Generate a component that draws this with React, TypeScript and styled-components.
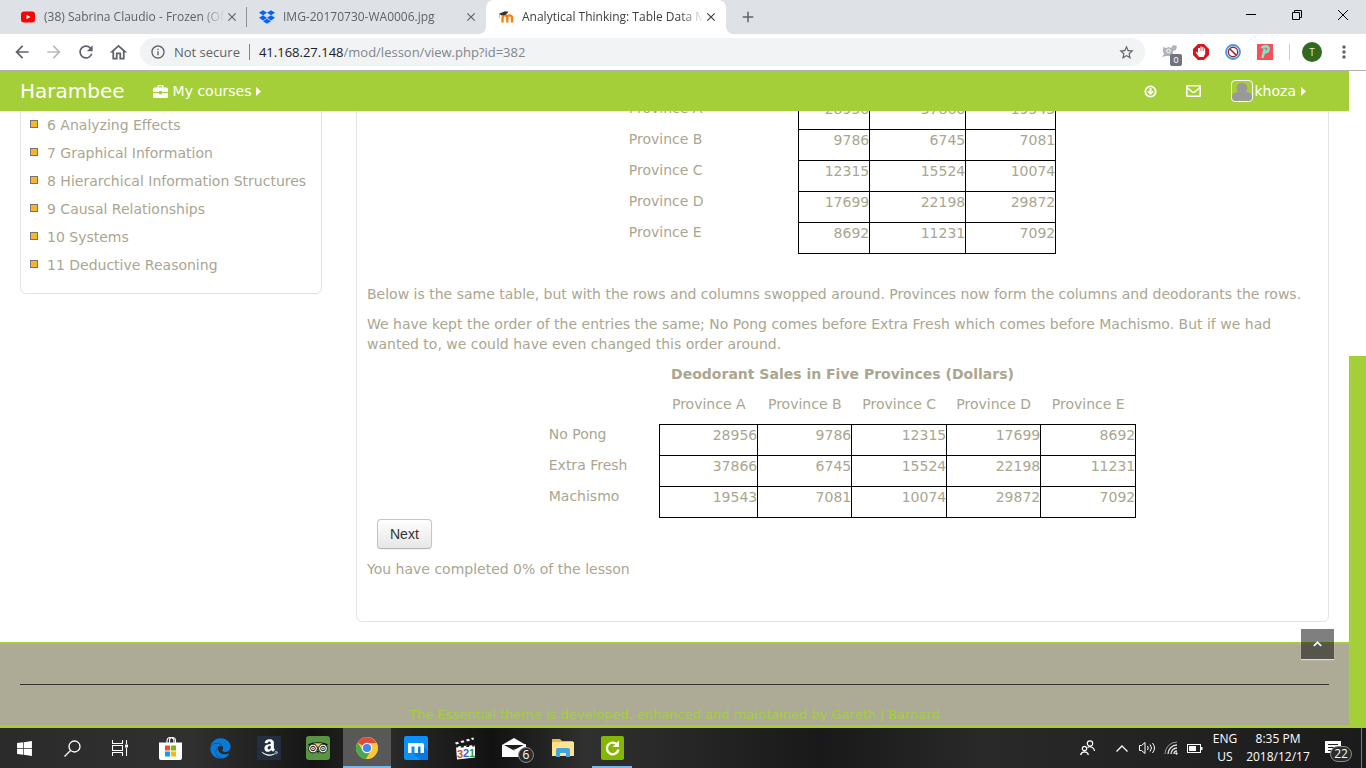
import React from 'react';
import styled, { createGlobalStyle } from 'styled-components';
import {
  MdArrowBack,
  MdArrowForward,
  MdRefresh,
  MdOutlineHome,
  MdInfoOutline,
  MdStarBorder,
  MdMoreVert,
  MdClose,
  MdAdd,
} from 'react-icons/md';
import { FaDropbox, FaWindows, FaAmazon, FaEdge } from 'react-icons/fa';

const green = '#a5cf39';
const stone = '#adaa96';
const uiFont = "'Open Sans', 'Noto Sans', sans-serif";
const pageFont = "Verdana, 'DejaVu Sans', sans-serif";

const GlobalStyle = createGlobalStyle`
  *, *::before, *::after { box-sizing: border-box; }
  body { margin: 0; background: #fff; }
  button { font: inherit; color: inherit; background: none; border: 0; padding: 0; }
  p { margin: 0 0 10px; }
  svg { display: block; flex: none; }
`;

const Screen = styled.div`
  display: flex;
  flex-direction: column;
  height: 100vh;
  overflow: hidden;
`;

/* ---------- browser frame ---------- */

const TitleBar = styled.div`
  display: flex;
  flex: none;
  height: 34px;
  padding-left: 8px;
  background: #dee1e6;
  font: 12px/34px ${uiFont};
  color: #5f6368;
`;

const Tab = styled.div<{ $active?: boolean; $divider?: boolean }>`
  position: relative;
  display: flex;
  align-items: center;
  flex: 0 1 ${p => (p.$active ? 240 : 239)}px;
  min-width: 0;
  padding: 0 8px 0 12px;
  border-radius: 8px 8px 0 0;
  background: ${p => (p.$active ? '#fff' : 'transparent')};
  color: ${p => (p.$active ? '#3c4043' : '#5f6368')};
  ${p =>
    p.$divider &&
    `background: linear-gradient(#8d9196, #8d9196) right 0 top 7px / 1px 20px no-repeat;`}
  ${p =>
    p.$active &&
    `&::before, &::after {
      content: '';
      position: absolute;
      bottom: 0;
      width: 8px;
      height: 8px;
    }
    &::before { left: -8px; background: radial-gradient(circle at 0 0, #dee1e6 8px, #fff 8px); }
    &::after { right: -8px; background: radial-gradient(circle at 100% 0, #dee1e6 8px, #fff 8px); }`}
`;

const TabTitle = styled.span`
  flex: 1;
  min-width: 0;
  margin-left: 8px;
  white-space: nowrap;
  mask-image: linear-gradient(90deg, #000 calc(100% - 24px), transparent);
`;

const IconButton = styled.button<{ $size?: number }>`
  display: flex;
  flex: none;
  align-items: center;
  justify-content: center;
  width: ${p => p.$size ?? 32}px;
  height: ${p => p.$size ?? 32}px;
`;

const NewTab = styled(IconButton)`
  margin-left: 6px;
  height: 34px;
`;

const WindowButtons = styled.div`
  display: flex;
  margin-left: auto;
  color: #000;
  button { width: 46px; height: 29px; }
`;

const Toolbar = styled.div`
  display: flex;
  flex: none;
  align-items: center;
  height: 37px;
  padding: 0 6px;
  background: #fff;
  border-bottom: 1px solid #b0b0b0;
  color: #5f6368;
  font: 13px/28px ${uiFont};
`;

const AddressBar = styled.label`
  display: flex;
  flex: 1;
  align-items: center;
  height: 28px;
  margin: 0 8px 0 6px;
  padding: 0 10px;
  border-radius: 14px;
  background: #f1f3f4;
`;

const Security = styled.span`
  margin-left: 8px;
  padding-right: 9px;
  line-height: 16px;
  border-right: 1px solid #80868b;
`;

const Host = styled.span`
  margin-left: 9px;
  color: #202124;
`;

const PathInput = styled.input`
  flex: 1;
  min-width: 0;
  height: 28px;
  padding: 0;
  border: 0;
  outline: 0;
  background: none;
  font: inherit;
  color: #80868b;
`;

const Badge = styled.span`
  position: absolute;
  right: 3px;
  bottom: 2px;
  width: 12px;
  height: 12px;
  border-radius: 2px;
  background: #6f7480;
  color: #fff;
  font: 9px/12px 'Liberation Sans', sans-serif;
  text-align: center;
`;

const Extension = styled(IconButton)`
  position: relative;
`;

const Divider = styled.span`
  width: 1px;
  height: 16px;
  margin: 0 6px 0 8px;
  background: #c9ccd0;
`;

const Profile = styled.button`
  width: 20px;
  height: 20px;
  margin: 0 6px;
  border-radius: 50%;
  background: #33691e;
  color: #dfe9da;
  font: 10px/20px ${uiFont};
`;

/* ---------- page ---------- */

const Viewport = styled.div`
  display: flex;
  flex: 1;
  min-height: 0;
`;

const ScrollTrack = styled.div`
  display: grid;
  flex: 0 0 17px;
  grid-template-rows: 285fr 372fr;
  background: #fff;
  &::after { content: ''; grid-row: 2; background: ${green}; }
`;

const Page = styled.div`
  position: relative;
  display: flex;
  flex: 1;
  flex-direction: column;
  min-width: 0;
  background: #fff;
  color: #aaa690;
  font: 14px/20px ${pageFont};
`;

const NavBar = styled.header`
  position: relative;
  z-index: 1;
  display: flex;
  flex: none;
  align-items: center;
  height: 40px;
  padding: 0 43px 0 20px;
  background: ${green};
  color: #fff;
  a { color: inherit; text-decoration: none; }
`;

const Brand = styled.a`
  font-size: 20px;
`;

const NavLink = styled.a<{ $gap: number }>`
  display: flex;
  align-items: center;
  gap: 5px;
  margin-left: ${p => p.$gap}px;
`;

const Spacer = styled.span`
  flex: 1;
`;

const Avatar = styled.svg`
  margin-right: -3px;
`;

const Content = styled.div`
  display: flex;
  flex: 1;
  gap: 34px;
  align-items: flex-start;
  margin-top: -20px;
  padding: 0 20px 20px;
`;

const Card = styled.section`
  border: 1px solid #e3e3e3;
  border-radius: 6px;
`;

const Sidebar = styled(Card)`
  flex: 0 0 302px;
  padding: 19px 9px 14px;
`;

const Lessons = styled.ul`
  margin: 0;
  padding: 0;
  list-style: none;
`;

const Lesson = styled.li`
  display: flex;
  align-items: center;
  gap: 9px;
  height: 28px;
  white-space: nowrap;
  &::before {
    content: '';
    width: 8px;
    height: 8px;
    margin-bottom: 2px;
    background: #fdb32b;
    border: 1px solid #77746a;
  }
  a { color: inherit; text-decoration: none; }
`;

const Main = styled(Card)`
  flex: 1;
  min-width: 0;
  padding: 6px 10px 32px;
`;

const DataTable = styled.table`
  margin: 0 auto;
  border-collapse: collapse;
  table-layout: fixed;
  caption { padding-bottom: 10px; font-weight: bold; }
  th { font-weight: normal; padding: 0 0 10px; vertical-align: top; white-space: nowrap; }
  tbody th { text-align: left; line-height: 18px; }
  td {
    height: 31px;
    padding: 0 0 10px;
    border: 1px solid #000;
    text-align: right;
    vertical-align: top;
  }
`;

const Column = styled.col<{ $w: number }>`
  width: ${p => p.$w}px;
`;

const Article = styled.div`
  padding: 30px 0 0;
`;

const NextButton = styled.button`
  display: block;
  height: 30px;
  margin: 1px 10px 10px;
  padding: 0 12px;
  border: 1px solid #c5c5c5;
  border-bottom-color: #b3b3b3;
  border-radius: 4px;
  background: linear-gradient(#fff, #e6e6e6);
  box-shadow: 0 1px 2px rgba(0, 0, 0, 0.05);
  color: #333;
  font: 14px/20px 'Liberation Sans', Arial, sans-serif;
`;

const Footer = styled.footer`
  flex: none;
  height: 86px;
  padding: 0 20px;
  border-top: 2px solid ${green};
  border-bottom: 3px solid ${green};
  background: ${stone};
  color: ${green};
  font-size: 13px;
  text-align: center;
  overflow: hidden;
  hr { margin: 40px 0 20px; border: 0; border-top: 1px solid #333; }
`;

const BackToTop = styled.button`
  position: absolute;
  right: 15px;
  bottom: 69px;
  display: flex;
  align-items: center;
  justify-content: center;
  width: 33px;
  height: 30px;
  background: rgba(0, 0, 0, 0.5);
  box-shadow: 0 1px 1px rgba(255, 255, 255, 0.6);
`;

/* ---------- taskbar ---------- */

const Taskbar = styled.nav`
  display: flex;
  flex: none;
  align-items: center;
  height: 40px;
  background: linear-gradient(90deg, #2b2b2b, #303030 14%, #151515 23%, #2b2b2b 28%, #121212 36%, #303030 43%, #191919 60%, #292929 72%, #1b1b1b);
  color: #fff;
  font: 12px/18px ${uiFont};
`;

const Task = styled.button<{ $bg?: string; $line?: number; $w?: number }>`
  position: relative;
  display: flex;
  flex: none;
  align-items: center;
  justify-content: center;
  width: ${p => p.$w ?? 48}px;
  height: 40px;
  background: ${p => p.$bg ?? 'transparent'};
  &::after {
    content: '';
    position: absolute;
    bottom: 0;
    width: ${p => p.$line ?? 0}px;
    height: 2px;
    background: #76b9ed;
  }
`;

const Apps = styled.div`
  display: flex;
  gap: 1px;
  margin-left: 3px;
`;

const Count = styled.span<{ $wide?: boolean }>`
  position: absolute;
  left: ${p => (p.$wide ? 19 : 28)}px;
  top: ${p => (p.$wide ? 18 : 19)}px;
  width: ${p => (p.$wide ? 22 : 16)}px;
  height: 16px;
  border: 1px solid #8b8b8b;
  border-radius: 8px;
  background: #2c2c2c;
  font: 12px/14px ${uiFont};
  text-align: center;
`;

const Tray = styled.div`
  display: flex;
  align-items: center;
  margin-left: auto;
  padding-right: 4px;
`;

const TrayText = styled.div<{ $w: number }>`
  width: ${p => p.$w}px;
  text-align: center;
  white-space: nowrap;
`;

const DesktopEdge = styled.span`
  width: 1px;
  height: 40px;
  margin-left: 6px;
  background: #777;
`;

const lessons = [
  '6 Analyzing Effects',
  '7 Graphical Information',
  '8 Hierarchical Information Structures',
  '9 Causal Relationships',
  '10 Systems',
  '11 Deductive Reasoning',
];

type Row = [string, ...number[]];

const byProvince: Row[] = [
  ['Province A', 28956, 37866, 19543],
  ['Province B', 9786, 6745, 7081],
  ['Province C', 12315, 15524, 10074],
  ['Province D', 17699, 22198, 29872],
  ['Province E', 8692, 11231, 7092],
];

const byProduct: Row[] = [
  ['No Pong', 28956, 9786, 12315, 17699, 8692],
  ['Extra Fresh', 37866, 6745, 15524, 22198, 11231],
  ['Machismo', 19543, 7081, 10074, 29872, 7092],
];

function SalesTable({ rows, widths, title, heads }: {
  rows: Row[];
  widths: number[];
  title?: string;
  heads?: string[];
}) {
  return (
    <DataTable style={{ width: widths.reduce((a, b) => a + b, 0) }}>
      {title && <caption>{title}</caption>}
      <colgroup>{widths.map((w, i) => <Column key={i} $w={w} />)}</colgroup>
      {heads && (
        <thead>
          <tr>
            <th />
            {heads.map(h => <th key={h} scope="col">{h}</th>)}
          </tr>
        </thead>
      )}
      <tbody>
        {rows.map(([name, ...values]) => (
          <tr key={name}>
            <th scope="row">{name}</th>
            {values.map((v, i) => <td key={i}>{v}</td>)}
          </tr>
        ))}
      </tbody>
    </DataTable>
  );
}

const Caret = () => (
  <svg width="5" height="9" viewBox="0 0 5 9"><path d="M0 0l5 4.5L0 9z" fill="#fff" /></svg>
);

const YouTubeIcon = () => (
  <svg width="16" height="16" viewBox="0 0 16 16">
    <rect x="1" y="2.500" width="14" height="11" rx="3" fill="#f00" />
    <path d="M6.500 5.800v4.400l4-2.200z" fill="#fff" />
  </svg>
);

const MoodleIcon = () => (
  <svg width="16" height="16" viewBox="0 0 16 16">
    <path d="M4.500 13.500V8.800a2.400 2.400 0 0 1 4.800 0v4.700M9.300 8.800a2.400 2.400 0 0 1 4.800 0v4.700" fill="none" stroke="#f98012" strokeWidth="2.400" />
    <path d="M1 4.800l6-2.600 3.500.6-2.500 3-4.500.6z" fill="#333" />
    <path d="M1.500 5v4" stroke="#c9a58a" strokeWidth=".8" />
  </svg>
);

const ChromeIcon = () => (
  <svg width="22" height="22" viewBox="0 0 22 22">
    <circle cx="11" cy="11" r="11" fill="#fbc834" />
    <path d="M11 11L1.500 5.500A11 11 0 0 1 20.500 6H11z" fill="#de4b3c" />
    <path d="M1.500 5.500A11 11 0 0 0 10 22l5.300-8.500-8.600 0z" fill="#4aa853" />
    <path d="M20.500 6A11 11 0 0 1 10 22l5.300-8.500L14 6z" fill="#fbc834" />
    <circle cx="11" cy="11" r="5.200" fill="#fff" />
    <circle cx="11" cy="11" r="4.100" fill="#4285f4" />
  </svg>
);

const StoreIcon = () => (
  <svg width="24" height="24" viewBox="0 0 24 24">
    <path d="M8 7V5a3.500 3.500 0 0 1 7 0v2M10.500 7V4.500a3 3 0 0 1 6 0V7" fill="none" stroke="#fff" strokeWidth="1.100" />
    <path d="M0 6.500h23V22a2 2 0 0 1-2 2H2a2 2 0 0 1-2-2z" fill="#fff" />
    <path d="M6 9.500h5v5H6z" fill="#f25022" />
    <path d="M12 9.500h5v5h-5z" fill="#7fba00" />
    <path d="M6 15.500h5v5H6z" fill="#00a4ef" />
    <path d="M12 15.500h5v5h-5z" fill="#ffb900" />
  </svg>
);

const OwlIcon = () => (
  <svg width="24" height="24" viewBox="0 0 24 24">
    <rect width="24" height="24" rx="3" fill="#589442" />
    <path d="M2 8.500c5-3 15-3 20 0l-2 2H4z" fill="#111" />
    <path d="M7.500 7.300h9L12 12z" fill="#f5c75b" />
    <g fill="#fff" stroke="#111" strokeWidth="1">
      <circle cx="7" cy="12.500" r="4.400" />
      <circle cx="17" cy="12.500" r="4.400" />
      <circle cx="7" cy="12.500" r="2.300" />
      <circle cx="17" cy="12.500" r="2.300" />
    </g>
    <circle cx="7" cy="12.500" r="1.100" fill="#e33" />
    <circle cx="17" cy="12.500" r="1.100" fill="#3a8a3a" />
    <path d="M10.700 15l1.300 2.500 1.300-2.500z" fill="#111" />
  </svg>
);

const MaxthonIcon = () => (
  <svg width="24" height="24" viewBox="0 0 24 24">
    <rect width="24" height="24" rx="2" fill="#0b91fb" />
    <path d="M9 17l7 7h8v-9l-5-5z" fill="#0878e0" />
    <path d="M4 7h14a2 2 0 0 1 2 2v8h-3.500v-6.500H14V17h-3.500v-6.500H7.500V17H4z" fill="#fff" />
  </svg>
);

const ClapperIcon = () => (
  <svg width="24" height="24" viewBox="0 0 24 24">
    <path d="M2 6l18-5 1 3L3 9z" fill="#1a1a1a" />
    <path d="M2 6.500l3-.8 1 2-3 .8zM7.500 5l3-.8 1 2-3 .8zM13 3.500l3-.8 1 2-3 .8zM18 2l2.500-.6.5 2-2 .6z" fill="#eee" />
    <path d="M3 10.500l19-1.500v12.500l-18 2z" fill="#fff" />
    <path d="M3 9h3l-1 2.500H3zM8.500 9h3l-1 2.500h-3zM14 8.500h3l-1 2.500h-3zM19.500 8.500H22l-.5 2H19z" fill="#222" />
    <g fontFamily="Liberation Sans, sans-serif" fontWeight="700" fontSize="11">
      <text x="4" y="21.500" fill="#d9481c">3</text>
      <text x="10" y="21" fill="#2a6bc4">2</text>
      <text x="16" y="20.500" fill="#2f9a3c">1</text>
    </g>
  </svg>
);

const MailIcon = () => (
  <svg width="24" height="20" viewBox="0 0 24 20">
    <path d="M0 7l12-7 12 7v12H0z" fill="#fff" />
    <path d="M2 7h20l-10 5.500z" fill="#1d1d1d" />
    <path d="M10 11l5 1.500 9-5.500v-1l-12 6z" fill="#fff" />
  </svg>
);

const FolderIcon = () => (
  <svg width="22" height="20" viewBox="0 0 22 20">
    <path d="M0 1h8l2 2h11v4H0z" fill="#e9b93f" />
    <path d="M1 4h21v14H0V5z" fill="#ffe391" />
    <path d="M4 19v-7a2 2 0 0 1 2-2h10a2 2 0 0 1 2 2v7h-4v-4H8v4z" fill="#42a5de" />
  </svg>
);

const ReloadAppIcon = () => (
  <svg width="23" height="24" viewBox="0 0 23 24">
    <rect width="23" height="24" rx="2" fill="#84b800" />
    <path d="M15.800 8.300a5.800 5.800 0 1 0 1.600 5.200" fill="none" stroke="#fff" strokeWidth="2.400" />
    <path d="M18 4.500V11h-6.500z" fill="#fff" />
  </svg>
);

const SignalIcon = () => (
  <svg width="14" height="14" viewBox="0 0 14 14" fill="none" stroke="#ddd">
    <path d="M1 13A12 12 0 0 1 13 1" stroke="#999" />
    <path d="M4 13A9 9 0 0 1 13 4M7 13a6 6 0 0 1 6-6M10 13a3 3 0 0 1 3-3" strokeWidth="1.400" />
    <circle cx="12.500" cy="12.500" r=".8" fill="#fff" />
  </svg>
);

const TabClose = () => (
  <IconButton $size={14} aria-label="Close tab"><MdClose size={14} /></IconButton>
);

export default function App() {
  return (
    <Screen>
      <GlobalStyle />
      <TitleBar>
        <Tab $divider>
          <YouTubeIcon />
          <TabTitle>(38) Sabrina Claudio - Frozen (Of</TabTitle>
          <TabClose />
        </Tab>
        <Tab>
          <FaDropbox size={16} color="#0062ff" />
          <TabTitle>IMG-20170730-WA0006.jpg</TabTitle>
          <TabClose />
        </Tab>
        <Tab $active>
          <MoodleIcon />
          <TabTitle>Analytical Thinking: Table Data M</TabTitle>
          <TabClose />
        </Tab>
        <NewTab aria-label="New tab"><MdAdd size={18} /></NewTab>
        <WindowButtons>
          <IconButton aria-label="Minimize">
            <svg width="10" height="10"><path d="M0 4.500h10" stroke="#000" /></svg>
          </IconButton>
          <IconButton aria-label="Restore">
            <svg width="10" height="10" fill="none" stroke="#000"><path d="M.5 2.500h7v7h-7zM2.500 2.500v-2h7v7h-2" /></svg>
          </IconButton>
          <IconButton aria-label="Close">
            <svg width="10" height="10" stroke="#000"><path d="M0 0l10 10M10 0L0 10" /></svg>
          </IconButton>
        </WindowButtons>
      </TitleBar>

      <Toolbar>
        <IconButton aria-label="Back"><MdArrowBack size={20} /></IconButton>
        <IconButton aria-label="Forward"><MdArrowForward size={20} color="#b9bbbe" /></IconButton>
        <IconButton aria-label="Reload"><MdRefresh size={20} /></IconButton>
        <IconButton aria-label="Home"><MdOutlineHome size={21} /></IconButton>
        <AddressBar>
          <MdInfoOutline size={16} />
          <Security>Not secure</Security>
          <Host>41.168.27.148</Host>
          <PathInput aria-label="Address" defaultValue="/mod/lesson/view.php?id=382" />
          <MdStarBorder size={17} />
        </AddressBar>
        <Extension aria-label="Squirrel extension">
          <svg width="18" height="16" viewBox="0 0 18 16">
            <path d="M3 3l3 1 3-1 2 1 2-3 4 1-1 4-3 1v4l-3 1H6l-4 1 2-3-1-2z" fill="#b1b3bb" />
            <circle cx="8.500" cy="7" r="1.800" fill="none" stroke="#fff" />
          </svg>
          <Badge>0</Badge>
        </Extension>
        <Extension aria-label="Ad blocker">
          <svg width="16" height="16" viewBox="0 0 16 16">
            <path d="M5 0h6l5 5v6l-5 5H5l-5-5V5z" fill="#d8141c" />
            <path d="M5 4v5L3.500 7.500 2.800 8.500 6 13h4.500l1.700-3V4.500h-1.200V7h-.5V3H9.200v4h-.5V2.500H7.400V7h-.5V4z" fill="#fff" />
          </svg>
        </Extension>
        <Extension aria-label="Popup blocker">
          <svg width="16" height="16" viewBox="0 0 16 16" fill="none">
            <circle cx="8" cy="8" r="7" fill="#fff" stroke="#4a96dd" strokeWidth="1.800" />
            <circle cx="8" cy="8" r="4.700" stroke="#8c2b35" strokeWidth="1.400" />
            <path d="M4.700 4.700l6.600 6.600" stroke="#8c2b35" strokeWidth="1.600" />
          </svg>
        </Extension>
        <Extension aria-label="P extension">
          <svg width="16" height="16" viewBox="0 0 16 16">
            <rect width="16" height="16" fill="#fb4f57" />
            <path d="M5.500 14L7.800 4.500M4.500 4C6.500 1.800 12.300 1.600 11.600 5c-.5 3-3 3.700-5 3.300" fill="none" stroke="#66f0d0" strokeWidth="2.600" />
          </svg>
        </Extension>
        <Divider />
        <Profile aria-label="Profile">T</Profile>
        <IconButton aria-label="Menu"><MdMoreVert size={20} /></IconButton>
      </Toolbar>

      <Viewport>
        <Page>
          <NavBar>
            <Brand href="#">Harambee</Brand>
            <NavLink href="#" $gap={28}>
              <svg width="15" height="13" viewBox="0 0 15 13" fill="#fff">
                <path d="M4.500 2.500V1a1 1 0 0 1 1-1h4a1 1 0 0 1 1 1v1.500h3A1.500 1.500 0 0 1 15 4v3H9V6H6v1H0V4a1.500 1.500 0 0 1 1.500-1.500zM6 1.200v1.300h3V1.200zM0 8h6v1.200h3V8h6v3.700a1.300 1.300 0 0 1-1.300 1.300H1.300A1.300 1.300 0 0 1 0 11.700z" />
              </svg>
              My courses <Caret />
            </NavLink>
            <Spacer />
            <NavLink href="#" $gap={0} aria-label="Downloads">
              <svg width="13" height="13" viewBox="0 0 13 13" fill="none" stroke="#fff">
                <circle cx="6.500" cy="6.500" r="5.200" strokeWidth="1.800" />
                <path d="M6.500 3v5" strokeWidth="2" />
                <path d="M3.800 6.200l2.700 2.700 2.700-2.700" strokeWidth="1.600" />
              </svg>
            </NavLink>
            <NavLink href="#" $gap={29} aria-label="Messages">
              <svg width="15" height="12" viewBox="0 0 15 12" fill="none" stroke="#fff" strokeWidth="1.500">
                <rect x=".8" y=".8" width="13.400" height="10.400" rx=".5" />
                <path d="M1 2.500l5 4.200a2.300 2.300 0 0 0 3 0l5-4.200" />
              </svg>
            </NavLink>
            <NavLink href="#" $gap={30}>
              <Avatar width="22" height="22" viewBox="0 0 22 22">
                <path d="M1 21v-4c0-4 4-5 6-5a5.500 5.500 0 1 1 8 0c2 0 6 1 6 5v4z" fill="#999" />
                <rect x=".5" y=".5" width="21" height="21" rx="3.500" fill="none" stroke="#fff" />
              </Avatar>
              khoza <Caret />
            </NavLink>
          </NavBar>

          <Content>
            <Sidebar as="aside">
              <Lessons>
                {lessons.map(l => <Lesson key={l}><a href="#">{l}</a></Lesson>)}
              </Lessons>
            </Sidebar>
            <Main as="main">
              <SalesTable rows={byProvince} widths={[170, 71, 96, 90]} />
              <Article>
                <p>
                  Below is the same table, but with the rows and columns swopped around. Provinces now form the
                  columns and deodorants the rows.
                </p>
                <p>
                  We have kept the order of the entries the same; No Pong comes before Extra Fresh which comes
                  before Machismo. But if we had wanted to, we could have even changed this order around.
                </p>
              </Article>
              <SalesTable
                rows={byProduct}
                widths={[111, 98, 94, 95, 94, 95]}
                title="Deodorant Sales in Five Provinces (Dollars)"
                heads={['Province A', 'Province B', 'Province C', 'Province D', 'Province E']}
              />
              <NextButton>Next</NextButton>
              <p>You have completed 0% of the lesson</p>
            </Main>
          </Content>

          <Footer>
            <hr />
            The Essential theme is developed, enhanced and maintained by Gareth J Barnard
          </Footer>
          <BackToTop aria-label="Back to top">
            <svg width="9" height="6" viewBox="0 0 9 6"><path d="M.8 5l3.700-3.700L8.200 5" fill="none" stroke="#fff" strokeWidth="1.700" /></svg>
          </BackToTop>
        </Page>
        <ScrollTrack />
      </Viewport>

      <Taskbar>
        <Task aria-label="Start"><FaWindows size={17} /></Task>
        <Task aria-label="Search">
          <svg width="17" height="17" viewBox="0 0 17 17" fill="none" stroke="#fff" strokeWidth="1.300">
            <circle cx="10.500" cy="6.500" r="5.500" />
            <path d="M6.500 10.500L.5 16.500" />
          </svg>
        </Task>
        <Task aria-label="Task view">
          <svg width="16" height="16" viewBox="0 0 16 16" fill="none" stroke="#fff" strokeWidth="1.100">
            <path d="M.5 0v3.500h10V0M.5 16v-3.500h10V16M.5 5.500h10v5H.5zM14.500 0v4M14.500 8v8" />
            <path d="M13 4.500h3v3h-3z" fill="#fff" stroke="none" />
          </svg>
        </Task>
        <Apps>
          <Task aria-label="Store"><StoreIcon /></Task>
          <Task aria-label="Edge"><FaEdge size={21} color="#0a7ad8" /></Task>
          <Task aria-label="Amazon">
            <svg width="24" height="24" viewBox="0 0 24 24">
              <rect width="24" height="24" rx="1" fill="#232f3e" />
              <FaAmazon x="3" y="2" size={19} color="#fff" />
            </svg>
          </Task>
          <Task aria-label="Tripadvisor"><OwlIcon /></Task>
          <Task aria-label="Chrome" $bg="#585858" $line={48}><ChromeIcon /></Task>
          <Task aria-label="Maxthon"><MaxthonIcon /></Task>
          <Task aria-label="Media Player Classic"><ClapperIcon /></Task>
          <Task aria-label="Mail"><MailIcon /><Count>6</Count></Task>
          <Task aria-label="File Explorer"><FolderIcon /></Task>
          <Task aria-label="Sync" $line={40}><ReloadAppIcon /></Task>
        </Apps>
        <Tray>
          <Task aria-label="People" $w={40}>
            <svg width="15" height="16" viewBox="0 0 15 16" fill="none" stroke="#fff" strokeWidth="1.200">
              <circle cx="10" cy="3.500" r="2.700" />
              <circle cx="4.500" cy="8.500" r="2.200" />
              <path d="M.6 15a4 4 0 0 1 7.800 0M7.500 7.500a4.500 4.500 0 0 1 7 3.500" />
            </svg>
          </Task>
          <Task aria-label="Show hidden icons" $w={30}>
            <svg width="12" height="7" viewBox="0 0 12 7" fill="none" stroke="#fff" strokeWidth="1.300"><path d="M.5 6.500L6 1l5.500 5.500" /></svg>
          </Task>
          <Task aria-label="Volume" $w={20}>
            <svg width="17" height="14" viewBox="0 0 17 14" fill="none" stroke="#fff">
              <path d="M.5 4.500h2l3.500-3v11l-3.500-3h-2zM8.500 5q1.500 2 0 4M11 3.500q3 3.500 0 7M13.500 2q4 5 0 10" />
            </svg>
          </Task>
          <Task aria-label="Network" $w={28}><SignalIcon /></Task>
          <Task aria-label="Battery" $w={20}>
            <svg width="16" height="9" viewBox="0 0 16 9">
              <rect x=".5" y=".5" width="13" height="8" fill="none" stroke="#fff" />
              <path d="M2 2h7v5H2zM14 3h1.500v3H14z" fill="#fff" />
            </svg>
          </Task>
          <TrayText $w={40}>ENG<br />US</TrayText>
          <TrayText $w={66}>8:35 PM<br />2018/12/17</TrayText>
          <Task aria-label="Notifications" $w={44}>
            <svg width="16" height="16" viewBox="0 0 16 16">
              <path d="M0 1h16v12H9l-3 3v-3H0z" fill="#fff" />
              <path d="M3 4.500h10M3 7.500h10M3 10.500h5" stroke="#222" />
            </svg>
            <Count $wide>22</Count>
          </Task>
          <DesktopEdge />
        </Tray>
      </Taskbar>
    </Screen>
  );
}
